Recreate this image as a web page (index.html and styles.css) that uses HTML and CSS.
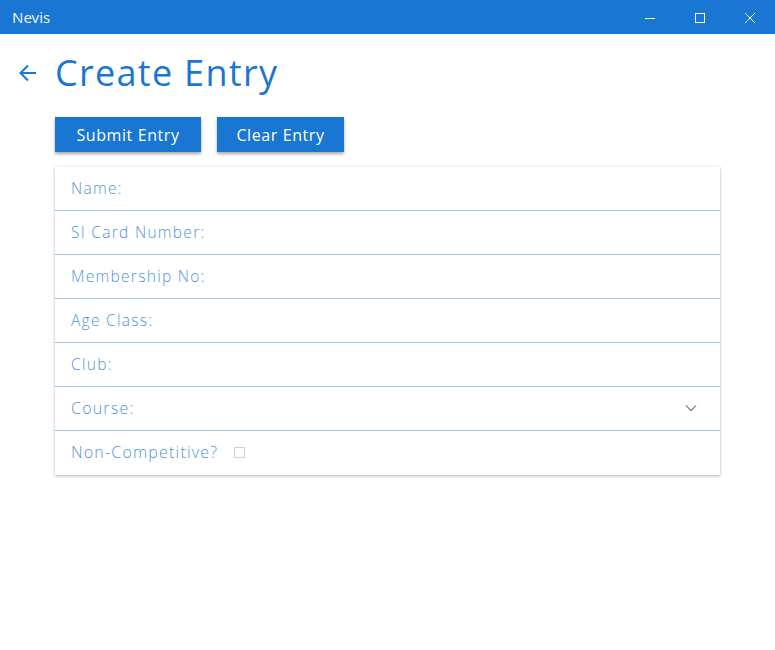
FILE: index.html
```html
<!DOCTYPE html>
<html>
<head>
<meta charset="utf-8">
<link rel="stylesheet" href="styles.css">
</head>
<body>
<div class="titlebar">
  <span class="app-name">Nevis</span>
  <div class="win-controls">
    <span class="wc"><svg width="12" height="12" viewBox="0 0 12 12"><path d="M1 6.5h10" stroke="#fff" stroke-width="1"/></svg></span>
    <span class="wc"><svg width="12" height="12" viewBox="0 0 12 12"><rect x="1.5" y="1.5" width="9" height="9" fill="none" stroke="#fff" stroke-width="1"/></svg></span>
    <span class="wc"><svg width="12" height="12" viewBox="0 0 12 12"><path d="M1 1L11 11M11 1L1 11" stroke="#fff" stroke-width="1"/></svg></span>
  </div>
</div>
<main class="content">
  <div class="header">
    <svg class="back" width="20" height="20" viewBox="0 0 20 20"><path d="M18 10H3M10 2.5L2.5 10L10 17.5" fill="none" stroke="#1976d2" stroke-width="2"/></svg>
    <h1 class="title">Create Entry</h1>
  </div>
  <div class="body">
    <div class="actions">
      <button class="btn">Submit Entry</button>
      <button class="btn">Clear Entry</button>
    </div>
    <div class="card">
      <div class="row"><span class="label">Name:</span></div>
      <div class="row"><span class="label">SI Card Number:</span></div>
      <div class="row"><span class="label">Membership No:</span></div>
      <div class="row"><span class="label">Age Class:</span></div>
      <div class="row"><span class="label">Club:</span></div>
      <div class="row select"><span class="label alt">Course:</span>
        <svg class="chev" width="12" height="8" viewBox="0 0 12 8"><path d="M1 1.5L6 6.5L11 1.5" fill="none" stroke="#8a8a8a" stroke-width="1.4"/></svg>
      </div>
      <div class="row last"><span class="label alt">Non-Competitive?</span><span class="checkbox"></span></div>
    </div>
  </div>
</main>
</body>
</html>
```
FILE: styles.css
```css
* { box-sizing: border-box; }
html, body { margin: 0; padding: 0; background: #fff; }
body { width: 775px; height: 650px; overflow: hidden; font-family: "Open Sans", sans-serif; }
.titlebar {
  height: 34px; background: #1976d2; color: #fff;
  display: flex; align-items: center; justify-content: space-between;
  padding-left: 12px;
}
.app-name { font-family: "Noto Sans", sans-serif; font-size: 15px; color: #e8f0fb; }
.win-controls { display: flex; height: 100%; }
.wc { width: 50px; display: flex; align-items: center; justify-content: center; padding-top: 1px; }
.content { padding: 18px 0 0 18px; }
.header { display: flex; align-items: center; gap: 17px; height: 42px; }
.back { display: block; }
.title {
  margin: 0; font-weight: 400; font-size: 36px; color: #1976d2;
  font-family: "Open Sans", sans-serif; letter-spacing: 1.3px; line-height: 42px;
}
.body { padding-left: 37px; width: 702px; }
.actions { display: flex; gap: 16px; margin-top: 23px; }
.btn {
  height: 35px; border: none; background: #1976d2; color: #fff;
  font-family: "Open Sans", sans-serif; font-size: 16px; letter-spacing: 0.6px;
  padding: 0; box-shadow: 0 2px 3px rgba(0,0,0,0.35); cursor: pointer;
}
.btn:first-child { width: 146px; }
.btn:last-child { width: 127px; }
.card {
  margin-top: 15px; background: #fff;
  box-shadow: 0 1px 3px rgba(0,0,0,0.3);
}
.row {
  height: 44px; border-bottom: 1px solid #9ec8f2;
  display: flex; align-items: center; padding: 0 23px 2px 16px;
}
.row.last { border-bottom: none; }
.row.select { justify-content: space-between; }
.label { font-size: 15.5px; color: #4f93de; font-weight: 300; letter-spacing: 1.3px; }
.label.alt { font-size: 16px; font-weight: 300; letter-spacing: 1.2px; }
.checkbox {
  width: 11px; height: 11px; border: 1px solid #d0d0d0; margin-left: 16px; margin-top: 1px;
}
.chev { display: block; }
```
